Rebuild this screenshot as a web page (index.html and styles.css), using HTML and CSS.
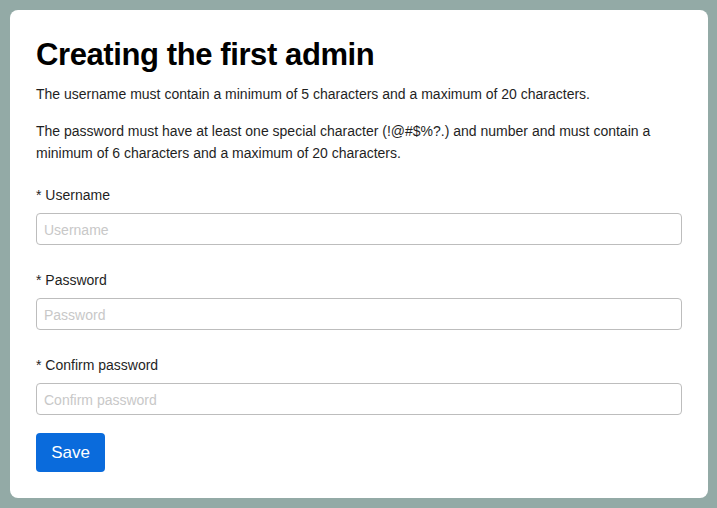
FILE: index.html
```html
<!DOCTYPE html>
<html>
<head>
<meta charset="utf-8">
<link rel="stylesheet" href="styles.css">
</head>
<body>
<div class="card">
  <h1 class="title">Creating the first admin</h1>
  <p class="note first">The username must contain a minimum of 5 characters and a maximum of 20 characters.</p>
  <p class="note second">The password must have at least one special character (!@#$%?.) and number and must contain a minimum of 6 characters and a maximum of 20 characters.</p>
  <form class="form">
    <div class="field">
      <label class="label">* Username</label>
      <input class="input" type="text" placeholder="Username">
    </div>
    <div class="field">
      <label class="label">* Password</label>
      <input class="input" type="password" placeholder="Password">
    </div>
    <div class="field">
      <label class="label">* Confirm password</label>
      <input class="input" type="password" placeholder="Confirm password">
    </div>
    <button class="btn" type="button">Save</button>
  </form>
</div>
</body>
</html>
```
FILE: styles.css
```css
html, body {
  margin: 0;
  padding: 0;
  height: 100%;
}
body {
  background: #93aaa6;
  font-family: "Liberation Sans", Arial, sans-serif;
  padding: 10px 9px 10px 10px;
  box-sizing: border-box;
}
.card {
  background: #fff;
  border-radius: 8px;
  height: 488px;
  box-sizing: border-box;
  padding: 26px 26px;
}
.title {
  margin: 0;
  font-size: 31px;
  letter-spacing: -0.4px;
  line-height: 38px;
  font-weight: bold;
  color: #000;
}
.note {
  margin: 0;
  font-size: 14px;
  line-height: 22px;
  color: #1f1f1f;
}
.note.first {
  margin-top: 9px;
}
.note.second {
  margin-top: 15px;
}
.form {
  margin-top: 20px;
  display: flex;
  flex-direction: column;
  align-items: flex-start;
}
.field {
  display: flex;
  flex-direction: column;
  width: 100%;
  margin-bottom: 24px;
}
.field:last-of-type {
  margin-bottom: 18px;
}
.label {
  font-size: 14px;
  line-height: 22px;
  color: #1f1f1f;
  margin-bottom: 7px;
}
.input {
  height: 32px;
  box-sizing: border-box;
  border: 1px solid #bdbdbd;
  border-radius: 4px;
  padding: 2px 7px 0;
  font-family: "Liberation Sans", Arial, sans-serif;
  font-size: 14px;
  color: #222;
  outline: none;
}
.input::placeholder {
  color: #c8c8c8;
}
.btn {
  width: 69px;
  height: 39px;
  background: #0a6bdc;
  color: #fff;
  border: none;
  border-radius: 4px;
  font-family: "Liberation Sans", Arial, sans-serif;
  font-size: 17px;
  padding: 0;
}
```
